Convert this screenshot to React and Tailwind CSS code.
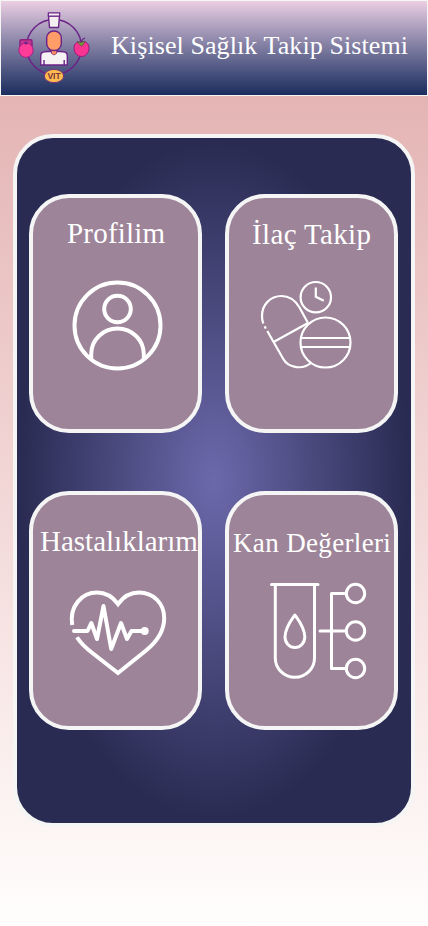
const Logo = () => (
  <svg className="h-[96px] w-[110px] shrink-0" viewBox="0 0 110 96" fill="none" strokeLinejoin="round">
    <circle cx="54" cy="47" r="27.5" stroke="#6b2287" strokeWidth="1.5" />
    <path d="M48.5 16h11l-1 11.5h-9z" fill="#f3eef0" stroke="#6b2287" strokeWidth="1.4" />
    <path d="M48.3 12.8h11.4V16H48.3z" fill="#f3eef0" stroke="#6b2287" strokeWidth="1.2" />
    <path d="M51 49h6v6h-6z" fill="#f98f60" stroke="#6b2287" />
    <path d="M40.7 65V56q0-4 4-4.2l6-.6q3.3 5.5 6.600 0l6 .6q4 .2 4 4.200v9z" fill="#f6f1f3" stroke="#6b2287" strokeWidth="1.4" />
    <path d="M44 60v5M64.200 60v5" stroke="#6b2287" strokeWidth="1.4" />
    <path d="M51.500 50h5v3.500q-2.500 3-5 0z" fill="#f98f60" stroke="#7a2a80" strokeWidth=".6" />
    <rect x="46.700" y="31" width="14.600" height="19.500" rx="7" fill="#ff9c68" stroke="#6b2287" strokeWidth="1.4" />
    <path d="M20 47v-6q0-1.300 1.300-1.300h9.400q1.300 0 1.300 1.300v6" fill="#c83591" stroke="#8b207f" strokeWidth="1.500" />
    <circle cx="26" cy="50.200" r="7.200" fill="#ff3d99" stroke="#a02288" />
    <circle cx="26" cy="43" r="1.600" fill="#6b2287" />
    <path d="M81.500 42.500c4-2 7.500 1 7.500 5.500 0 5-3.500 8.500-7.500 8.500S74 53 74 48c0-4.500 3.500-7.500 7.500-5.500z" fill="#f93391" stroke="#8b207f" />
    <path d="m77 41.500 4 1 4-1.500-1.500 3.500-2 1.500-2-1.500z" fill="#68a52e" stroke="#684052" strokeWidth=".7" />
    <path d="M81.500 42q.5-3 3.500-4" stroke="#6b2287" strokeWidth="1.200" />
    <ellipse cx="54" cy="76" rx="9.600" ry="6.600" fill="#ffbd4e" stroke="#78337b" />
    <text x="54" y="79.200" textAnchor="middle" fontFamily="Liberation Sans, sans-serif" fontWeight="700" fontSize="8.500" fill="#79333e">VIT</text>
  </svg>
);

const ProfileIcon = () => (
  <svg className="h-[110px] w-[120px]" viewBox="0 0 120 110" fill="none" stroke="#fff" strokeWidth="4">
    <circle cx="57.500" cy="55.500" r="43" />
    <circle cx="57.500" cy="39" r="13.300" />
    <path d="M31.200 88.500V84a26.300 25.500 0 0 1 52.600 0v4.500" />
  </svg>
);

const PillsIcon = () => (
  <svg className="h-[110px] w-[120px]" viewBox="0 0 120 110" fill="none" stroke="#fff" strokeWidth="2.200">
    <circle cx="65.800" cy="27.200" r="15.200" />
    <path d="M65.800 17.500v9.300l8 4" />
    <circle cx="75.500" cy="72.500" r="25" />
    <path d="M51 68h49M51 77h49M24.500 71.500l33.500-18.500M58 53 49.500 37.500C44.500 29 38.500 26 31.500 26 20 26 12 35 12 46q0 4 1.300 7.500M14.700 56.200l1.100 2.400M17.300 61l16 28c5 9 20 11.300 28 3.500" />
  </svg>
);

const HeartIcon = () => (
  <svg className="h-[110px] w-[120px]" viewBox="0 0 120 110" fill="none" stroke="#fff" strokeWidth="4" strokeLinejoin="round">
    <path d="M12.200 45C9.200 26 22 12.500 37 12.500c9 0 16 4.500 21 11.500 5-7 12-11.500 21-11.500 14 0 25.200 10.500 25.200 25.500 0 13-7.700 24-18.200 32.500L58 93 33 73.500C27 69 20.500 63 17 57.300" strokeLinejoin="miter" />
    <path d="M14 51h13.500l3.800-8 5.700 16 6.500-33 7.700 43 9.800-26 6 16 4.500-8H84" strokeLinecap="round" />
    <circle cx="84.700" cy="51" r="4" fill="#fff" stroke="none" />
  </svg>
);

const BloodIcon = () => (
  <svg className="h-[120px] w-[120px]" viewBox="0 0 120 120" fill="none" stroke="#fff" strokeWidth="3">
    <path d="M11.500 14.500h46.500M60 61h26M86 23.500H71.500v75H86" strokeLinecap="round" strokeLinejoin="round" />
    <path d="M15.300 15v73a19.600 19.300 0 0 0 39.200 0V15" />
    <path d="M34.900 45C31 50.500 25 58 25 67a9.900 10.500 0 0 0 19.800 0C44.800 58 38.800 50.500 34.900 45z" strokeLinejoin="round" />
    <circle cx="95.500" cy="23.500" r="9.200" />
    <circle cx="95.500" cy="61" r="9.200" />
    <circle cx="95.500" cy="98.500" r="9.200" />
  </svg>
);

const Card = ({ label, labelClass, iconClass, children }) => (
  <button className="flex h-[239px] w-[173px] flex-col items-start overflow-hidden rounded-[40px] border-4 border-[#f5f5f5] bg-[#9d8499] text-left text-white">
    <span className={`block h-10 shrink-0 whitespace-nowrap leading-10 ${labelClass}`}>{label}</span>
    <span className={`block shrink-0 ${iconClass}`}>{children}</span>
  </button>
);

export default function App() {
  return (
    <div className="flex h-[926px] w-[428px] flex-col overflow-hidden bg-linear-to-b from-[#e4b4b4] from-10% to-[#fffefd] font-['Liberation_Serif',serif]">
      <header className="flex h-24 shrink-0 border border-[#f5f5f5] bg-linear-to-b from-[#eccfe3] to-[#1c2d5e] text-white">
        <div className="-mt-px -ml-px h-24 w-[110px] shrink-0"><Logo /></div>
        <h1 className="mt-[25px] ml-px h-10 text-[26px] leading-10 tracking-[0.09px] whitespace-nowrap">Kişisel Sağlık Takip Sistemi</h1>
      </header>
      <main className="mt-[38px] ml-[13px] h-[693px] w-[402px] shrink-0 rounded-[40px] border-4 border-[#f5f5f5] bg-[radial-gradient(#6c69ab,#292b52_70%)] pt-14 pl-3">
        <div className="grid grid-cols-[173px_173px] gap-x-[23px] gap-y-[58px]">
          <Card label="Profilim" labelClass="mt-[15px] ml-[34px] text-[29px] tracking-[0.2px]" iconClass="mt-[17px] ml-[27px]"><ProfileIcon /></Card>
          <Card label="İlaç Takip" labelClass="mt-[16px] ml-[23px] text-[29px] tracking-[0.35px]" iconClass="mt-[16px] ml-[21px]"><PillsIcon /></Card>
          <Card label="Hastalıklarım" labelClass="mt-[26px] ml-[7px] text-[29px]" iconClass="mt-[19px] ml-[27px]"><HeartIcon /></Card>
          <Card label="Kan Değerleri" labelClass="mt-[28px] ml-1 text-[27px] tracking-[0.35px]" iconClass="mt-[7px] ml-[31px]"><BloodIcon /></Card>
        </div>
      </main>
    </div>
  );
}
